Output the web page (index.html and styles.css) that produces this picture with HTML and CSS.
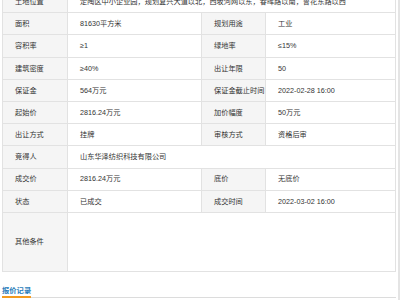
FILE: index.html
```html
<!DOCTYPE html>
<html lang="zh">
<head>
<meta charset="utf-8">
<link rel="stylesheet" href="styles.css">
</head>
<body>
<div class="page">
  <main class="main">
    <table class="info">
      <colgroup>
        <col class="c-label"><col class="c-value"><col class="c-label2"><col class="c-value2">
      </colgroup>
      <tr><td class="label">土地位置</td><td class="value" colspan="3">定陶区中小企业园，规划复兴大道以北，西坂河网以东，春晖路以南，鲁花东路以西</td></tr>
      <tr><td class="label">面积</td><td class="value">81630平方米</td><td class="label">规划用途</td><td class="value">工业</td></tr>
      <tr><td class="label">容积率</td><td class="value">≥1</td><td class="label">绿地率</td><td class="value">≤15%</td></tr>
      <tr><td class="label">建筑密度</td><td class="value">≥40%</td><td class="label">出让年限</td><td class="value">50</td></tr>
      <tr><td class="label">保证金</td><td class="value">564万元</td><td class="label">保证金截止时间</td><td class="value">2022-02-28 16:00</td></tr>
      <tr><td class="label">起始价</td><td class="value">2816.24万元</td><td class="label">加价幅度</td><td class="value">50万元</td></tr>
      <tr><td class="label">出让方式</td><td class="value">挂牌</td><td class="label">审核方式</td><td class="value">资格后审</td></tr>
      <tr><td class="label">竞得人</td><td class="value" colspan="3">山东华泽纺织科技有限公司</td></tr>
      <tr><td class="label">成交价</td><td class="value">2816.24万元</td><td class="label">底价</td><td class="value">无底价</td></tr>
      <tr><td class="label">状态</td><td class="value">已成交</td><td class="label">成交时间</td><td class="value">2022-03-02 16:00</td></tr>
      <tr class="tall"><td class="label">其他条件</td><td class="value" colspan="3"></td></tr>
    </table>
    <div class="section-head"><span class="section-title">报价记录</span></div>
  </main>
  <div class="track"></div>
</div>
</body>
</html>
```
FILE: styles.css
```css
html, body {
  margin: 0;
  padding: 0;
  background: #fff;
}
body {
  font-family: "Liberation Sans", "Noto Sans CJK SC", sans-serif;
  font-size: 7.2px;
  color: #333;
  overflow: hidden;
}
.page {
  display: flex;
  height: 300px;
}
.main {
  flex: 1;
  padding-left: 2px;
  padding-right: 2px;
  margin-top: -10px;
}
.track {
  width: 2px;
  background: #e4e4e4;
}
.info {
  width: 100%;
  border-collapse: collapse;
  table-layout: fixed;
  border: 1px solid #dedede;
}
.c-label { width: 65px; }
.c-value { width: 134px; }
.c-label2 { width: 64px; }
.info td {
  border: 1px solid #e2e2e2;
  height: 21.2px;
  padding: 0 0 0 12px;
  white-space: nowrap;
  overflow: hidden;
  vertical-align: middle;
  line-height: 1;
}
.info td.label {
  background: #f5f5f5;
  padding-left: 12px;
}
.info td.value {
  background: #fff;
}
.info tr.tall td {
  height: 58px;
}
.section-head {
  margin-top: 15px;
  border-bottom: 1px solid #dcdcdc;
  line-height: 1;
}
.section-title {
  display: inline-block;
  font-weight: bold;
  color: #2a7dba;
  font-size: 7.3px;
  padding-bottom: 2px;
  border-bottom: 2px solid #f39a1e;
  margin-bottom: -1px;
}
```
